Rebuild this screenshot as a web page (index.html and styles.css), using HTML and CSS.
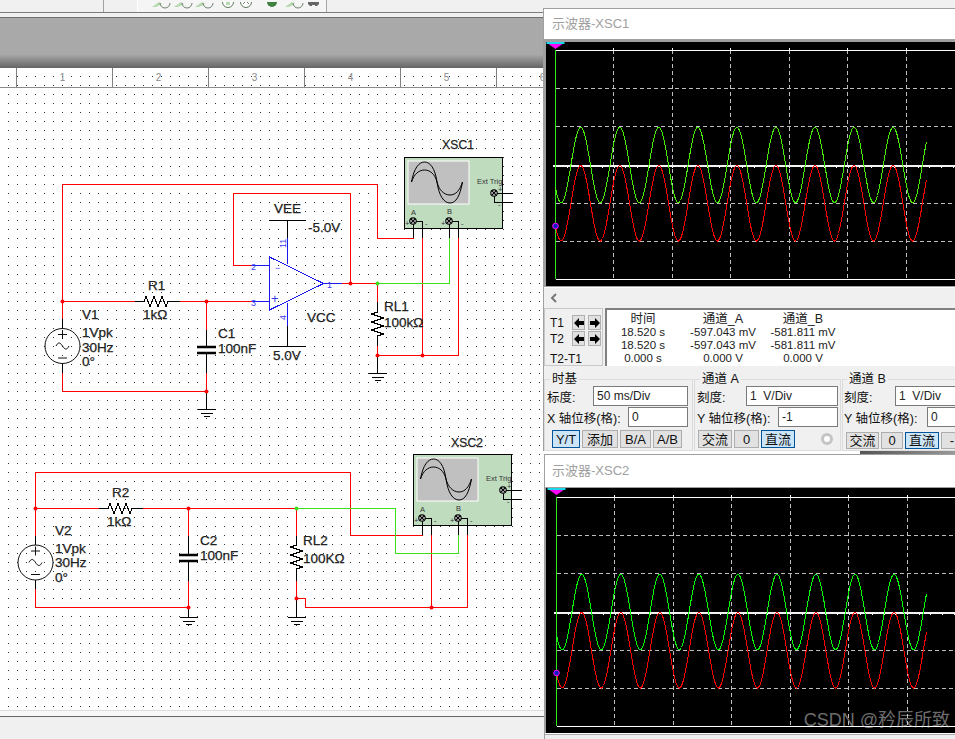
FILE: index.html
```html
<!DOCTYPE html>
<html lang="zh">
<head>
<meta charset="UTF-8">
<title>Multisim</title>
<link rel="stylesheet" href="styles.css">
</head>
<body>
<div class="app">

<div class="toolbar">
  <div class="tool-left"><span class="tool-cut">Feature</span></div>
  <div class="tool-icons">
    <svg width="189" height="12" viewBox="0 0 189 12">
      <g class="lens"><path class="handle" d="M14 5l7-5 3 2-6 3z"/><path d="M22 1a5 5 0 0 0 10 0"/></g>
      <g class="lens"><path class="handle" d="M36 5l7-5 3 2-6 3z"/><path d="M44 1a5 5 0 0 0 10 0"/></g>
      <g class="lens"><path class="handle" d="M57 5l7-5 3 2-6 3z"/><path d="M65 1a5 5 0 0 0 10 0"/></g>
      <g class="lens"><circle class="face" cx="90" cy="0" r="5.5"/><path class="handle" d="M88 0h4v3h-4z"/></g>
      <g class="lens"><circle class="face" cx="108" cy="0" r="5.5"/><path d="M105 2l2-2M111 2l-2-2"/></g>
      <g class="lens"><circle class="solid" cx="134" cy="0" r="5"/></g>
      <g class="lens"><path class="handle" d="M147 5l7-5 3 2-6 3z"/><path d="M155 1a5 5 0 0 0 10 0"/></g>
      <path class="blob" d="M170 0h11v2l-2 2h-2v-1h-3v1h-2l-2-2z"/>
    </svg>
  </div>
</div>
<div class="rule"></div>
<div class="band"></div>

<div class="ruler">
  <span>1</span><span>2</span><span>3</span><span>4</span><span>5</span><span>6</span>
</div>

<div class="canvas">
  <svg class="schematic" width="545" height="622" viewBox="0 88 545 622">
    <defs>
      <g id="xsc">
        <rect class="xsc-body" x="404.5" y="157.5" width="98" height="71"/>
        <rect class="xsc-screen" x="408" y="161" width="61" height="43"/>
        <path class="curve" d="M411.5 182C414 168 419 162 424.5 162S435 168 437 182C439 196 444 203 450 203S460 196 462.5 182"/>
        <path class="curve" d="M411.5 182C414 174 419 170 424.5 170S435 174 437 182C439 190 444 195 450 195S460 190 462.5 182"/>
        <path class="blk" d="M413 221H422.5V238M449.5 221H458.5V238M449.5 221V238M413.5 221V238M494.5 193H513M494.5 193V202H513"/>
        <circle class="term" cx="413" cy="221" r="3.2"/><path class="term-x" d="M411 219l4 4m0-4l-4 4"/>
        <circle class="term" cx="449" cy="221" r="3.2"/><path class="term-x" d="M447 219l4 4m0-4l-4 4"/>
        <circle class="term" cx="494" cy="193" r="3.2"/><path class="term-x" d="M492 191l4 4m0-4l-4 4"/>
        <text class="tiny" x="411" y="215">A</text>
        <text class="tiny" x="447" y="214">B</text>
        <text class="tiny" x="477" y="184">Ext Trig</text>
        <text class="tiny" x="405" y="226">+</text><text class="tiny" x="425" y="226">-</text>
        <text class="tiny" x="441" y="226">+</text><text class="tiny" x="461" y="226">-</text>
        <text class="tiny" x="498" y="192">+</text><text class="tiny" x="498" y="207">-</text>
      </g>
      <g id="gnd">
        <path class="blk" d="M-9 0H9M-6 4H6M-3 7H3"/>
      </g>
    </defs>

    <!-- circuit 1 -->
    <use href="#xsc"/>
    <path class="blk" d="M135 301.5H144l2-5 4 10 4-10 4 10 4-10 4 10 2-5H180"/>
    <path class="blk" d="M377.5 302V312l-6 2 12 4-12 4 12 4-12 4 12 4-6 2V346"/>
    <path class="blk" d="M206.5 329.5V346M206.5 353V373M62.5 319V329M62.5 363V373M206.5 391V409M377.5 355V373"/>
    <path class="plate" d="M197 347H216M197 353H216"/>
    <use href="#gnd" x="206.5" y="409.5"/>
    <use href="#gnd" x="377.5" y="373.5"/>
    <circle class="src" cx="62.5" cy="346" r="17.5"/>
    <path class="src-mark" d="M58 334.5h9M62.5 330v9M58 358h9M56 346c2-4 4-4 6.500 0s4.500 4 6.500 0"/>
    <path class="red" d="M62.500 319V184.500H377.500V238.500H413.500M135 301.500H62.500M180 301.500H252M206.500 301.500V329.500M206.500 373V391.500H62.500V373M251 265.500H233.500V193.500H350.500V283.500H342M350.500 283.500H377.500M377.500 283.500V302M377.500 346V355.500H458.500V238M422.500 238V355.500"/>
    <path class="grn" d="M377.500 283.500H449.500V238"/>
    <path class="blu" d="M252 265.500H269.500M252 301.500H269.500M269.500 257V310L323.500 283.500ZM323.500 283.500H342M287.500 238V264M287.500 303V326"/>
    <path class="blk" d="M269 220.500H306M287.500 220.500V238M269 346.500H306M287.500 326V346"/>
    <text class="pin" x="275" y="271">−</text><text class="pin pin-big" x="271" y="303">+</text>
    <text class="pin" x="251" y="270">2</text><text class="pin" x="251" y="306">3</text><text class="pin" x="327" y="288">1</text>
    <text class="pin" transform="rotate(-90 286 248)" x="286" y="248">11</text>
    <text class="pin" transform="rotate(-90 286 320)" x="286" y="320">4</text>
    <circle class="jct" cx="62.500" cy="301.500" r="2"/><circle class="jct" cx="206.500" cy="301.500" r="2"/><circle class="jct" cx="206.500" cy="391.500" r="2"/>
    <circle class="jct" cx="350.500" cy="283.500" r="2"/><circle class="jct" cx="377.500" cy="355.500" r="2"/><circle class="jct" cx="422.500" cy="355.500" r="2"/>
    <circle class="jct-g" cx="377.500" cy="283.500" r="2"/>

    <text class="lbl" x="82" y="319">V1</text><text class="lbl" x="82" y="337">1Vpk</text><text class="lbl" x="82" y="352">30Hz</text><text class="lbl" x="82" y="366">0°</text>
    <text class="lbl" x="148" y="290">R1</text><text class="lbl" x="143" y="319">1kΩ</text>
    <text class="lbl" x="218" y="338">C1</text><text class="lbl" x="218" y="353">100nF</text>
    <text class="lbl" x="274" y="213">VEE</text><text class="lbl" x="308" y="232">-5.0V</text>
    <text class="lbl" x="307" y="322">VCC</text><text class="lbl" x="273" y="360">5.0V</text>
    <text class="lbl" x="384" y="311">RL1</text><text class="lbl" x="384" y="327">100kΩ</text>
    <text class="lbl lbl-xsc" x="442" y="149">XSC1</text>

    <!-- circuit 2 -->
    <use href="#xsc" x="9" y="297"/>
    <path class="blk" d="M99 508.500H108l2-5 4 10 4-10 4 10 4-10 4 10 2-5H143"/>
    <path class="blk" d="M296.500 536V545l-6 2 12 4-12 4 12 4-12 4 12 4-6 2V581"/>
    <path class="blk" d="M188.500 535.500V555M188.500 561V581M35.500 535V545M35.500 580V589M188.500 607V617M296.500 598V617"/>
    <path class="plate" d="M179 555H198M179 561H198"/>
    <use href="#gnd" x="188.500" y="617.500"/>
    <use href="#gnd" x="296.500" y="617.500"/>
    <circle class="src" cx="35.500" cy="562.500" r="17.500"/>
    <path class="src-mark" d="M31 551h9M35.500 546.500v9M31 574.500h9M29 562.500c2-4 4-4 6.500 0s4.500 4 6.500 0"/>
    <path class="red" d="M35.500 535.500V472.500H350.500V535.500H422.500M99 508.500H35.500M143 508.500H296.500M188.500 508.500V535.500M188.500 581V607.500H35.500V589M296.500 508.500V536M296.500 581V598.500H305.500V607.500H467.500V535M431.500 535V607.500"/>
    <path class="grn" d="M296.500 508.500H395.500V553.500H458.500V535"/>
    <circle class="jct" cx="35.500" cy="508.500" r="2"/><circle class="jct" cx="188.500" cy="508.500" r="2"/><circle class="jct" cx="188.500" cy="607.500" r="2"/>
    <circle class="jct" cx="296.500" cy="598.500" r="2"/><circle class="jct" cx="431.500" cy="607.500" r="2"/>
    <circle class="jct-g" cx="296.500" cy="508.500" r="2"/>

    <text class="lbl" x="55" y="535">V2</text><text class="lbl" x="55" y="553">1Vpk</text><text class="lbl" x="55" y="567">30Hz</text><text class="lbl" x="55" y="582">0°</text>
    <text class="lbl" x="112" y="497">R2</text><text class="lbl" x="107" y="526">1kΩ</text>
    <text class="lbl" x="200" y="545">C2</text><text class="lbl" x="200" y="560">100nF</text>
    <text class="lbl" x="303" y="545">RL2</text><text class="lbl" x="303" y="563">100KΩ</text>
    <text class="lbl lbl-xsc" x="451" y="447">XSC2</text>
  </svg>
</div>

<div class="foot"></div>

<div class="under-win"></div>

<section class="scope scope-one">
  <div class="scope-title">示波器-XSC1</div>
  <div class="scope-plot"><svg class="trace" id="plot1" width="409" height="244"></svg></div>
  <div class="scrollbar"><svg width="8" height="10" viewBox="0 0 8 10"><path d="M6 1L2 5l4 4" /></svg></div>

  <div class="cursors">
    <div class="cursor-box">
      <span class="t1">T1</span>
      <button class="arrow"><svg width="10" height="10" viewBox="0 0 10 10"><path d="M0 5l5-5v3h5v4H5v3z"/></svg></button>
      <button class="arrow"><svg width="10" height="10" viewBox="0 0 10 10"><path d="M10 5L5 0v3H0v4h5v3z"/></svg></button>
      <span class="t1">T2</span>
      <button class="arrow"><svg width="10" height="10" viewBox="0 0 10 10"><path d="M0 5l5-5v3h5v4H5v3z"/></svg></button>
      <button class="arrow"><svg width="10" height="10" viewBox="0 0 10 10"><path d="M10 5L5 0v3H0v4h5v3z"/></svg></button>
      <span class="t2t1">T2-T1</span>
    </div>
    <div class="readout">
      <b>时间</b><b>通道_A</b><b>通道_B</b>
      <span>18.520 s</span><span>-597.043 mV</span><span>-581.811 mV</span>
      <span>18.520 s</span><span>-597.043 mV</span><span>-581.811 mV</span>
      <span>0.000 s</span><span>0.000 V</span><span>0.000 V</span>
    </div>
  </div>

  <div class="controls">
    <fieldset class="group group-time">
      <legend>时基</legend>
      <div class="row"><label>标度:</label><input class="in-wide" value="50 ms/Div" readonly></div>
      <div class="row"><label>X 轴位移(格):</label><input class="in-short" value="0" readonly></div>
      <div class="btns btns-time">
        <button class="btn btn-on w28">Y/T</button><button class="btn w36">添加</button><button class="btn w31">B/A</button><button class="btn w29">A/B</button>
      </div>
    </fieldset>
    <fieldset class="group group-a">
      <legend>通道 A</legend>
      <div class="row"><label>刻度:</label><input class="in-mid" value="1  V/Div" readonly></div>
      <div class="row"><label>Y 轴位移(格):</label><input class="in-short" value="-1" readonly></div>
      <div class="btns btns-a">
        <button class="btn w34">交流</button><button class="btn w25">0</button><button class="btn btn-on w34">直流</button>
        <span class="radio"></span>
      </div>
    </fieldset>
    <fieldset class="group group-b">
      <legend>通道 B</legend>
      <div class="row"><label>刻度:</label><input class="in-mid" value="1  V/Div" readonly></div>
      <div class="row"><label>Y 轴位移(格):</label><input class="in-short" value="0" readonly></div>
      <div class="btns btns-b">
        <button class="btn w33">交流</button><button class="btn w22">0</button><button class="btn btn-on w34">直流</button><button class="btn w22">-</button>
      </div>
    </fieldset>
  </div>
</section>

<section class="scope scope-two">
  <div class="scope-title">示波器-XSC2</div>
  <div class="scope-plot"><svg class="trace" id="plot2" width="409" height="245"></svg></div>
</section>

<div class="mark">CSDN @矜辰所致</div>

</div>
<script src="app.js"></script>
</body>
</html>
```

FILE: styles.css
```css
*{box-sizing:border-box}
body{margin:0;background:#f0f0f0}
.app{position:relative;width:955px;height:739px;overflow:hidden;display:flex;flex-direction:column;font-family:"Liberation Sans","Noto Sans CJK SC",sans-serif;background:#f0f0f0}

.toolbar{height:12px;display:flex;flex:none;overflow:hidden}
.tool-left{width:104px;border-right:1px solid #a0a0a0;overflow:hidden;padding-left:10px}
.tool-cut{display:block;margin-top:-10px;font-size:11px;line-height:13px;color:#557;letter-spacing:.3px}
.tool-icons{width:190px;margin-left:33px;background:#f5f5f5;border-left:1px solid #fff;border-right:1px solid #a8a8a8}
.lens path,.lens circle{fill:none;stroke:#6f7f6f;stroke-width:1}
.lens .handle{fill:#b7d8b0;stroke:none}
.lens .face{fill:#fff;stroke:#5d7a5d}
.lens .solid{fill:#3f7f3f;stroke:none}
.blob{fill:#666}

.rule{height:5px;flex:none;border-top:1px solid #7c7c7c;background:#f0f0f0}
.band{height:50px;flex:none;border-top:1px solid #6e6e6e;background:linear-gradient(#a9a9a9 0,#a9a9a9 74%,#6a6a6a 100%)}

.ruler{height:21px;flex:none;display:flex;padding-left:16px;background:#fff radial-gradient(circle at .5px .5px,#333 .6px,transparent .9px) 8px 8px/9px 9px;border-top:1px solid #666;border-bottom:1px solid #8a8a8a}
.ruler span{width:96px;flex:none;border-left:1px solid #808080;text-align:center;padding-right:4px;font-size:10px;line-height:19px;color:#8a8a8a}

.canvas{flex:1;background:#fff radial-gradient(circle at .5px .5px,#333 .6px,transparent .9px) 8px 6px/9px 9px}
.schematic{display:block}
.foot{height:29px;flex:none;border-top:1px solid #ddd;background:linear-gradient(#f8f8f8 5px,#666 5px,#666 6px,#f0f0f0 6px)}

.red,.grn,.blu,.blk{fill:none;stroke-width:1;shape-rendering:crispEdges}
.red{stroke:#f00}
.grn{stroke:#3be01a}
.blu{stroke:#1a1aee}
.blk{stroke:#000}
.plate{stroke:#000;stroke-width:2.500;fill:none}
.src{fill:none;stroke:#111;stroke-width:1}
.src-mark{fill:none;stroke:#111;stroke-width:1}
.jct{fill:#f00}
.jct-g{fill:#3be01a}
.lbl{font-size:13.500px;fill:#222;stroke:#222;stroke-width:.25px}
.lbl-xsc{font-size:12px;letter-spacing:.2px}
.pin{font-size:9px;fill:#3a3aee}
.pin-big{font-size:13px}
.tiny{font-size:7.500px;fill:#333}
.xsc-body{fill:#bfdcbf;stroke:#000;stroke-width:1}
.xsc-screen{fill:#c0c0c0;stroke:#fff;stroke-width:1}
.curve{fill:none;stroke:#000;stroke-width:1}
.term{fill:#fff;stroke:#000;stroke-width:1.200}
.term-x{fill:none;stroke:#000;stroke-width:1.200}

.under-win{position:absolute;left:860px;top:451px;width:95px;height:4px;background:linear-gradient(90deg,#555,#999)}

.scope{position:absolute;background:#f0f0f0;overflow:hidden;border-top:1px solid #a0a0a0}
.scope-one{left:543px;top:8px;width:412px;height:443px;border-left:1px solid #a0a0a0}
.scope-two{left:544px;top:454px;width:411px;height:285px;border-left:1px solid #a0a0a0}
.scope-title{height:30px;background:#fff;padding-left:8px;font-size:13px;line-height:30px;color:#a0a0a0}
.scope-two .scope-title{height:32px;padding-left:7px;line-height:32px}
.scope-plot{background:#000;border:0 solid #a0a0a0}
.scope-one .scope-plot{height:248px;border-width:3px 0 1px 2px}
.scope-two .scope-plot{height:246px;border-width:1px 0 0 1px}
.trace{display:block}
.scope-two::after{content:"";display:block;height:6px;background:linear-gradient(#fff 1px,#aaa 1px,#aaa 2px,#eee 2px)}

.dash,.tick,.zero,.axis{shape-rendering:crispEdges}
.dash{stroke:#bdbdbd;stroke-dasharray:4 3}
.tick{stroke:#fff}
.zero{stroke:#f4f4f4;stroke-width:2}
.axis{stroke:#2ee81a}
.wave-a,.wave-b{fill:none;stroke-width:1;shape-rendering:crispEdges}
.wave-a{stroke:#f00}
.wave-b{stroke:#0f0}
#plot1 .wave-b{stroke:#44ee00}
.flag-top{fill:#19d7e6}
.flag{fill:#f0f}
.probe{fill:#1020c0;stroke:#f0f;stroke-width:1}

.scrollbar{height:21px;padding:3px 0 0 6px;border-top:1px solid #fff}
.scrollbar svg{display:block;margin-top:2px}
.scrollbar path{fill:none;stroke:#777;stroke-width:2}

.cursors{display:flex;height:58px;gap:2px;font-size:12px}
.cursor-box{width:59px;flex:none;display:grid;grid-template-columns:20px 14px 14px;grid-auto-rows:16px;column-gap:2px;align-content:start;padding:6px 0 0 5px;border:1px solid #c8c8c8;color:#111}
.cursor-box span{line-height:16px}
.t2t1{grid-column:1/4;margin-top:4px}
.arrow{width:13px;height:15px;padding:0;display:flex;align-items:center;justify-content:center;background:#e1e1e1;border:1px solid #b0b0b0}
.arrow svg{display:block}
.readout{flex:1;display:grid;grid-template-columns:72px 88px 72px;grid-auto-rows:13px;align-content:start;justify-items:center;padding-top:3px;background:#fff;border-left:2px solid #808080;border-top:2px solid #808080;font-size:11.500px;line-height:13px;color:#222}
.readout b{font-weight:normal;font-size:12.500px}

.controls{display:flex;gap:1px;padding-top:6px}
.group{flex:none;min-width:0;margin:0;height:79px;padding:0 4px 0 2px;border:1px solid #dcdcdc}
.group-time{width:149px}
.group-a{width:147px;padding-right:2px}
.group-b{width:150px;padding-left:1px}
.group legend{margin-left:3px;padding:0 2px;font-size:12.500px;line-height:14px;color:#111}
.row{display:flex;justify-content:space-between;align-items:center;height:20px;margin-bottom:1px;font-size:12.500px;color:#111}
.row label{white-space:nowrap}
.row input{height:20px;padding:0 3px;border:1px solid #7a7a7a;background:#fff;font:12px "Liberation Sans",sans-serif;color:#222;border-radius:0;outline:0}
.in-wide{width:95px}
.in-mid{width:92px}
.in-short{width:60px}

.btns{display:flex;gap:2px;margin-top:3px}
.btns-time{margin-left:5px}
.btns-a{margin-left:1px}
.btns-b{margin-left:2px;margin-top:5px}
.btn{height:18px;padding:0;background:#e1e1e1;border:1px solid #adadad;font:13px "Liberation Sans","Noto Sans CJK SC",sans-serif;line-height:15px;color:#111;border-radius:0}
.btn-on{background:#cce4f7;border-color:#005499}
.btns-b .btn{height:17px}
.w22{width:22px}.w25{width:25px}.w28{width:28px}.w29{width:29px}.w31{width:31px}.w33{width:33px}.w34{width:34px}.w36{width:36px}
.radio{width:12px;height:12px;margin:3px 0 0 24px;border-radius:50%;background:#fff;border:3px solid #c4c4c4}

.mark{position:absolute;right:5px;top:707px;font-size:18px;line-height:26px;color:rgba(205,205,205,.55)}
```

FILE: app.js
```javascript
// grid, traces and cursors of the two scope screens
function plot(id,dx,dy){
  var svg=document.getElementById(id);
  var top=8+dy, mid=123+dy, bot=237+dy, axis=9.5+dx;
  var s='';
  var grid=[67,126,184,243,301,360];
  grid.forEach(function(x){
    s+='<line x1="'+(x+dx+.5)+'" y1="'+top+'" x2="'+(x+dx+.5)+'" y2="'+bot+'" class="dash"/>';
    s+='<line x1="'+(x+dx+.5)+'" y1="'+(top-2)+'" x2="'+(x+dx+.5)+'" y2="'+top+'" class="tick"/>';
  });
  [-2,-1,1,2].forEach(function(n){
    var y=Math.floor(mid+n*38.3)+.5;
    s+='<line x1="'+axis+'" y1="'+y+'" x2="409" y2="'+y+'" class="dash"/>';
  });
  for(var x=axis;x<409;x+=11.7){
    s+='<line x1="'+x+'" y1="'+(mid+1)+'" x2="'+x+'" y2="'+(mid+3)+'" class="tick"/>';
  }
  s+='<line x1="'+axis+'" y1="'+(top+.5)+'" x2="409" y2="'+(top+.5)+'" class="tick"/>';
  s+='<line x1="'+axis+'" y1="'+(bot+.5)+'" x2="409" y2="'+(bot+.5)+'" class="tick"/>';
  s+='<line x1="'+(axis-3)+'" y1="'+(mid+.5)+'" x2="409" y2="'+(mid+.5)+'" class="zero"/>';
  s+='<line x1="'+axis+'" y1="'+top+'" x2="'+axis+'" y2="'+bot+'" class="axis"/>';
  s+='<path class="wave-a" d="'+sine(mid+38.2,34.7+dx,axis,381)+'"/>';
  s+='<path class="wave-b" d="'+sine(mid,34.7+dx,axis,381)+'"/>';
  s+='<path class="flag-top" d="M'+(axis-9)+' 0H'+(axis+9)+'V2H'+(axis-9)+'Z"/>';
  s+='<path class="flag" d="M'+(axis-7)+' 2H'+(axis+7)+'L'+axis+' 7Z"/>';
  s+='<circle class="probe" cx="'+axis+'" cy="'+(184+dy)+'" r="2.800"/>';
  svg.innerHTML=s;
}

function sine(c,peak,x0,x1){
  var d='', per=39.05, amp=37.8;
  for(var x=x0;x<=x1;x+=1){
    var y=c-amp*Math.cos(2*Math.PI*(x-peak)/per);
    d+=(d?'L':'M')+x.toFixed(1)+' '+y.toFixed(1);
  }
  return d;
}

plot('plot1',0,0);
plot('plot2',1,1);
```
